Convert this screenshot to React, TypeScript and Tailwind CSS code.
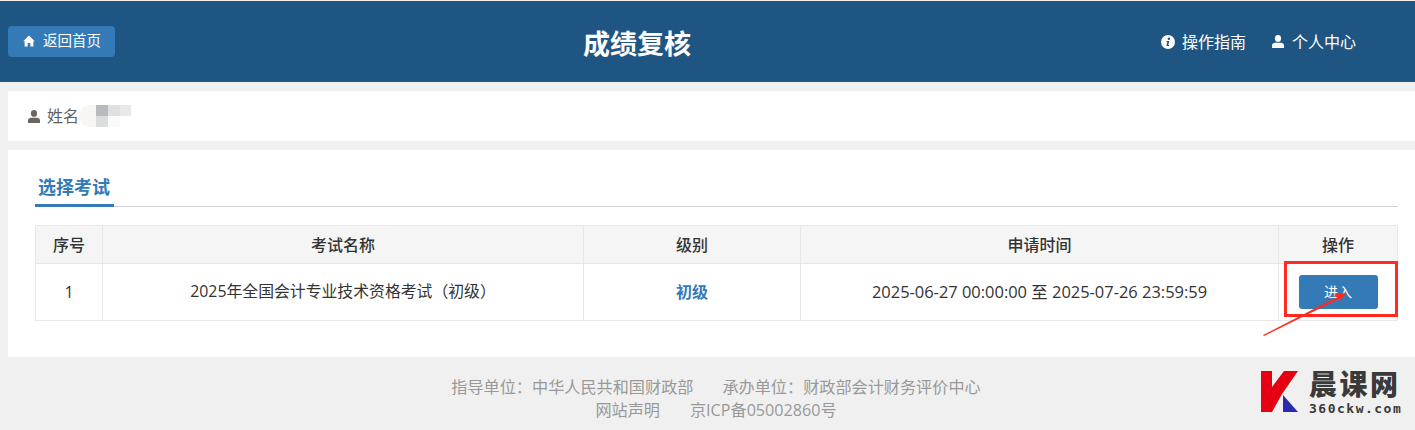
import React from "react";

const FONT = "font-['Open_Sans','Noto_Sans_CJK_SC',sans-serif]";

const columns = [
  { label: "序号", width: "w-[67px]" },
  { label: "考试名称", width: "w-[481px]" },
  { label: "级别", width: "w-[217px]" },
  { label: "申请时间", width: "w-[478px]" },
  { label: "操作", width: "w-[119px]" },
];

const HomeIcon = () => (
  <svg viewBox="0 0 12 12" className="w-3 h-3 fill-white">
    <path d="M6 .6 L11.8 6.2 L10.4 6.2 L10.4 11.4 L7.3 11.4 L7.3 8 L4.7 8 L4.7 11.4 L1.6 11.4 L1.6 6.2 L0.2 6.2 Z" />
  </svg>
);

const UserIcon = ({ className }: { className: string }) => (
  <svg viewBox="0 0 12 13" className={className}>
    <ellipse cx="6" cy="3.4" rx="3.1" ry="3.4" />
    <path d="M0 13 L0 10.4 C0 8.6 1.6 7.7 3 7.7 L9 7.7 C10.4 7.7 12 8.6 12 10.4 L12 13 Z" />
  </svg>
);

const InfoIcon = () => (
  <svg viewBox="0 0 14 14" className="w-3.5 h-3.5">
    <circle cx="7" cy="7" r="7" fill="#fff" />
    <circle cx="7.9" cy="3.7" r="1.2" fill="#1f5582" />
    <path d="M5.6 6 L8.3 6 L7.3 10 L8.2 10 L8 11 L5.4 11 L6.3 7 L5.4 7 Z" fill="#1f5582" />
  </svg>
);

const App = () => {
  return (
    <div className={`${FONT} relative w-[1415px] h-[430px] overflow-hidden bg-[#f0f0f0] pt-px`}>
      {/* Header */}
      <header className="relative flex items-center justify-between h-[81px] bg-[#1f5582] pl-2 pr-[59px] text-white">
        <button className="flex items-center gap-[8px] h-[31px] w-[107px] pl-[15px] mb-[1px] rounded-[4px] bg-[#337ab7] text-[14.5px]">
          <HomeIcon />
          <span>返回首页</span>
        </button>
        <h1 className="absolute left-[583px] top-[24px] text-[27px] leading-[38px] font-bold">成绩复核</h1>
        <nav className="flex items-center gap-[26px] text-base">
          <a className="flex items-center gap-[7px]">
            <InfoIcon />
            操作指南
          </a>
          <a className="flex items-center gap-2">
            <UserIcon className="w-3 h-[13px] fill-white" />
            个人中心
          </a>
        </nav>
      </header>

      {/* Candidate */}
      <section className="ml-2 mt-[9px] h-[50px] bg-white flex items-center pl-5 text-[#5f5f5f] text-base">
        <UserIcon className="w-3 h-[13px] fill-[#6b6460] mr-[7px]" />
        <span>姓名</span>
        <div className="flex blur-[0.5px]">
          <div className="w-[17px] h-[22px] rounded-l-full bg-[#f8f6f3]" />
          <div className="w-3">
            <div className="h-[11px] bg-[#b8bac2]" />
            <div className="h-[11px] bg-[#dcdcdc]" />
          </div>
          <div className="w-3">
            <div className="h-[11px] bg-[#e0e0e0]" />
            <div className="h-[11px] bg-[#f8fafc]" />
          </div>
          <div className="w-[11px] h-[11px] bg-[#e8e8e8]" />
        </div>
      </section>

      {/* Exam list */}
      <main className="ml-2 mt-[9px] h-[207px] bg-white pl-[27px] pr-[17px] pt-[26px]">
        <div className="h-[31px] border-b border-[#d5d5d5]">
          <div className="w-[79px] h-[31px] border-b-[3px] border-[#337ab7] text-[#337ab7] text-lg leading-[22px] font-bold pl-[3px]">
            选择考试
          </div>
        </div>
        <table className="mt-[18px] table-fixed border-collapse w-[1362px] text-base text-[#333]">
          <thead>
            <tr className="h-[38px] bg-[#f5f5f5]">
              {columns.map((c) => (
                <th key={c.label} className={`${c.width} border border-[#e8e8ea] font-medium`}>
                  {c.label}
                </th>
              ))}
            </tr>
          </thead>
          <tbody>
            <tr className="h-[57px] text-center">
              <td className="border border-[#e8e8ea]">1</td>
              <td className="border border-[#e8e8ea] text-[15.85px]">2025年全国会计专业技术资格考试（初级）</td>
              <td className="border border-[#e8e8ea] font-bold text-[#337ab7]">初级</td>
              <td className="border border-[#e8e8ea] text-[16.45px]">2025-06-27 00:00:00 至 2025-07-26 23:59:59</td>
              <td className="border border-[#e8e8ea]">
                <button className="w-[79px] h-[34px] rounded-[3px] bg-[#337ab7] text-white text-sm">进入</button>
              </td>
            </tr>
          </tbody>
        </table>
      </main>

      {/* Footer */}
      <footer className="pt-[19px] pl-[17px] text-center text-[16.15px] leading-[23px] text-[#999]">
        <p>
          <span>指导单位：中华人民共和国财政部</span>
          <span className="ml-[29px]">承办单位：财政部会计财务评价中心</span>
        </p>
        <p>
          <span>网站声明</span>
          <span className="ml-[30px]">京ICP备05002860号</span>
        </p>
      </footer>

      {/* Red annotation over the button */}
      <div className="absolute left-[1284px] top-[261px] w-[114px] h-[56px] border-[3px] border-[#ff2a20]" />
      <svg className="absolute left-[1255px] top-[290px] w-[100px] h-[50px]" viewBox="0 0 100 50">
        <path d="M8 45 L81 7.5 L83 9.5 L9 46 Z" fill="#ff2a20" />
        <path d="M91 3 L79 4.5 L85 11 Z" fill="#ff2a20" />
      </svg>

      {/* Logo */}
      <div className="absolute left-[1261px] top-[371px] flex items-start gap-[11px]">
        <svg viewBox="0 0 37 41" className="w-[37px] h-[41px]">
          <path d="M0 0 H11 V16 L23 0 H37 L21 23 L11 41 H0 Z" fill="#e60012" />
          <path d="M22 24 L37 41 H22 Z" fill="#2a2ab0" />
        </svg>
        <div className="flex flex-col items-start">
          <span className="text-[28px] leading-[30px] font-black text-[#3a3a3a] tracking-[2.5px] font-['Liberation_Sans','Noto_Sans_CJK_SC',sans-serif]">晨课网</span>
          <span className="text-[13px] leading-[15px] font-bold text-[#3a3a3a] tracking-[1.5px] font-['DejaVu_Sans_Mono',monospace]">360ckw.com</span>
        </div>
      </div>
    </div>
  );
};

export default App;
